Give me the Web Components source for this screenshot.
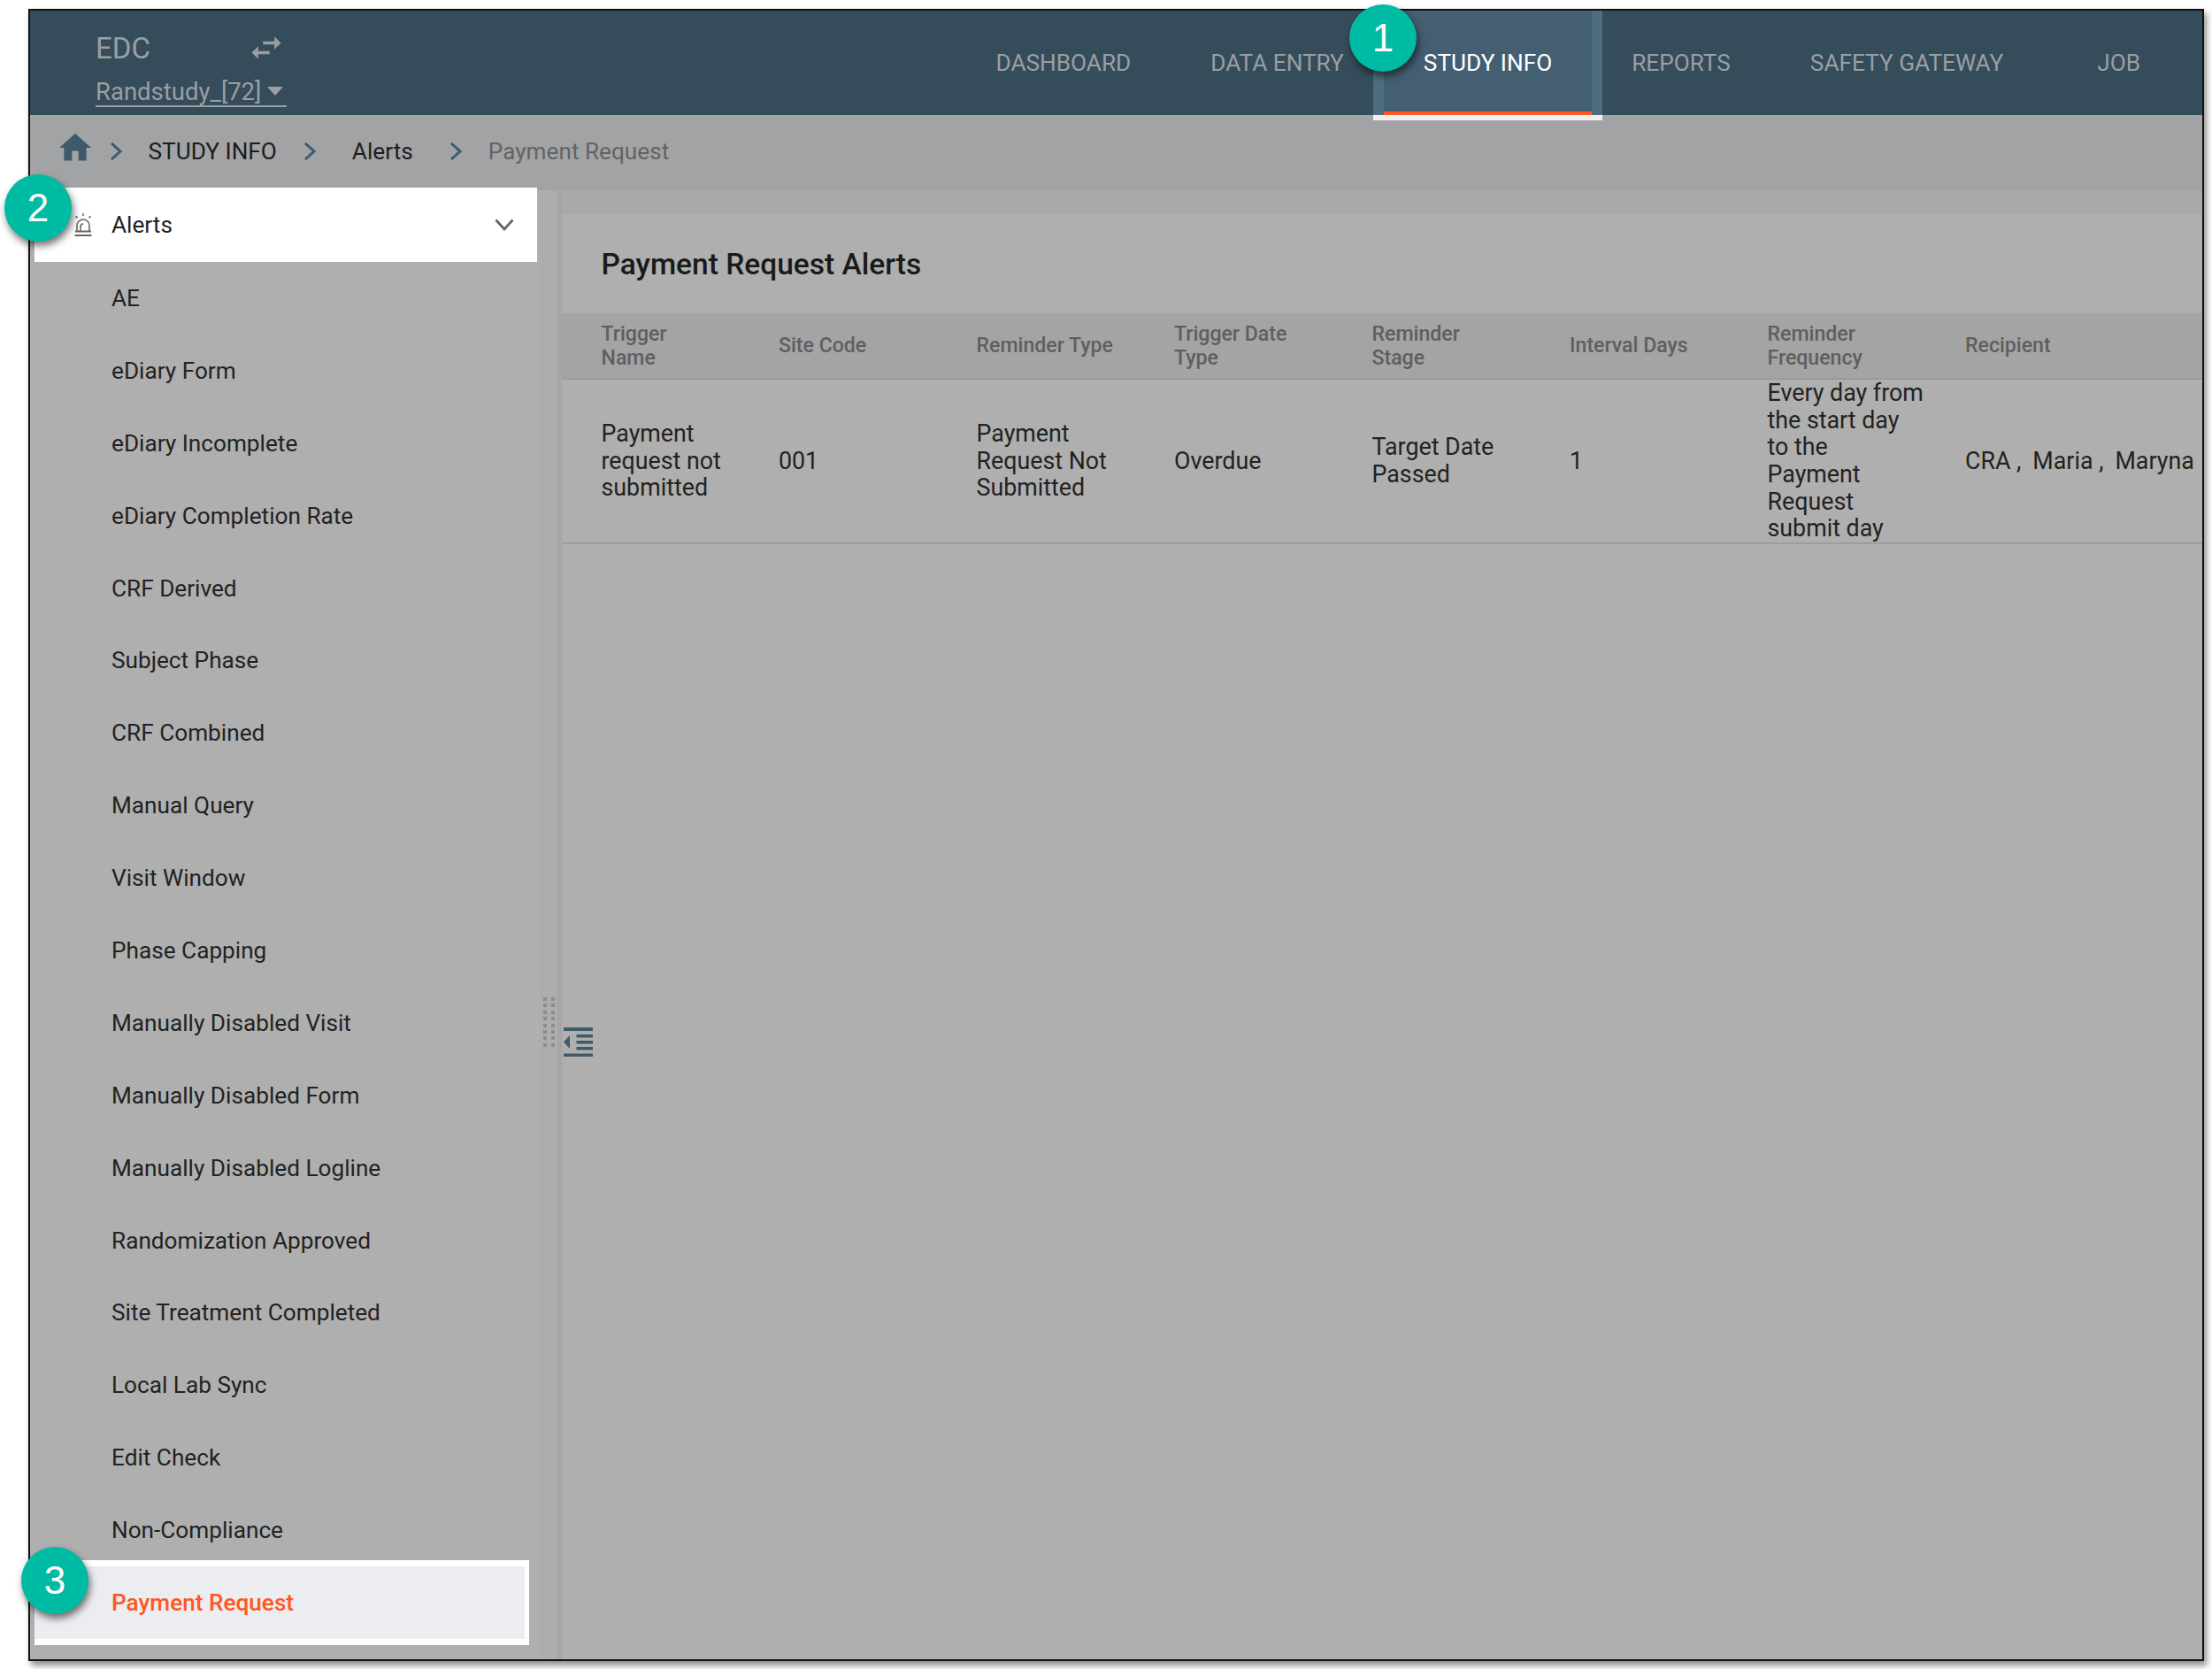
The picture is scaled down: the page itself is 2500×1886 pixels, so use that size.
<!DOCTYPE html>
<html>
<head>
<meta charset="utf-8">
<title>Payment Request Alerts</title>
<style>
  html, body { margin: 0; padding: 0; background: #fff; }
  body { width: 2500px; height: 1886px; overflow: hidden; font-family: Roboto, "Liberation Sans", sans-serif; position: relative; }
</style>
</head>
<body>

<app-frame>
  <top-bar slot="top">
    <nav-tab>DASHBOARD</nav-tab>
    <nav-tab>DATA ENTRY</nav-tab>
    <nav-tab active>STUDY INFO</nav-tab>
    <nav-tab>REPORTS</nav-tab>
    <nav-tab>SAFETY GATEWAY</nav-tab>
    <nav-tab class="last">JOB</nav-tab>
  </top-bar>
  <bread-crumbs slot="top"></bread-crumbs>
  <side-menu slot="side">
    <menu-item>AE</menu-item>
    <menu-item>eDiary Form</menu-item>
    <menu-item>eDiary Incomplete</menu-item>
    <menu-item>eDiary Completion Rate</menu-item>
    <menu-item>CRF Derived</menu-item>
    <menu-item>Subject Phase</menu-item>
    <menu-item>CRF Combined</menu-item>
    <menu-item>Manual Query</menu-item>
    <menu-item>Visit Window</menu-item>
    <menu-item>Phase Capping</menu-item>
    <menu-item>Manually Disabled Visit</menu-item>
    <menu-item>Manually Disabled Form</menu-item>
    <menu-item>Manually Disabled Logline</menu-item>
    <menu-item>Randomization Approved</menu-item>
    <menu-item>Site Treatment Completed</menu-item>
    <menu-item>Local Lab Sync</menu-item>
    <menu-item>Edit Check</menu-item>
    <menu-item>Non-Compliance</menu-item>
    <menu-item selected>Payment Request</menu-item>
  </side-menu>
  <alert-panel slot="main"></alert-panel>
</app-frame>

<step-badge style="left:1525px;top:5px">1</step-badge>
<step-badge style="left:5px;top:197px">2</step-badge>
<step-badge style="left:24px;top:1748px">3</step-badge>

<script>
class AppFrame extends HTMLElement {
  constructor() {
    super();
    this.attachShadow({mode: "open"}).innerHTML = `
    <style>
      :host {
        display: flex;
        flex-direction: column;
        box-sizing: border-box;
        width: 2459px;
        height: 1867px;
        margin: 10px 0 0 32px;
        border: 2px solid #111;
        background: #afafaf;
        box-shadow: 3px 5px 7px rgba(0,0,0,.45);
      }
      .body { flex: 1; display: flex; min-height: 0; }
      .gutter {
        position: relative;
        flex: none;
        box-sizing: border-box;
        width: 25px;
        background: #adadad;
        border-right: 5px solid #a6a6a6;
      }
      .dots {
        position: absolute;
        left: 4px;
        top: 912px;
        display: grid;
        grid-template-columns: 4px 4px;
        column-gap: 4.5px;
        row-gap: 3.4px;
      }
      .dots i { width: 4px; height: 4px; background: #8c8c8c; }
      .collapse { position: absolute; left: 27px; top: 946px; width: 33px; height: 33px; }
      .main { flex: 1; min-width: 0; }
    </style>
    <slot name="top"></slot>
    <div class="body">
      <slot name="side"></slot>
      <div class="gutter">
        <div class="dots">${"<i></i>".repeat(16)}</div>
        <svg class="collapse" viewBox="0 0 33 33" fill="#3f5a6b">
          <rect x="0" y="0" width="33" height="4"/>
          <rect x="14.5" y="8" width="18.5" height="3.5"/>
          <rect x="14.5" y="15" width="18.5" height="3.5"/>
          <rect x="14.5" y="22" width="18.5" height="3.5"/>
          <rect x="0" y="29.500" width="33" height="3.5"/>
          <path d="M7 9v15L0 16.500z"/>
        </svg>
      </div>
      <div class="main"><slot name="main"></slot></div>
    </div>`;
  }
}

class TopBar extends HTMLElement {
  constructor() {
    super();
    this.attachShadow({mode: "open"}).innerHTML = `
    <style>
      :host {
        display: flex;
        align-items: stretch;
        justify-content: space-between;
        height: 118px;
        background: #354c5a;
        position: relative;
        z-index: 2;
      }
      .study { padding: 0 0 0 74px; color: #9b9fa2; }
      .edc {
        display: flex;
        align-items: center;
        justify-content: space-between;
        width: 215px;
        height: 32px;
        margin-top: 26px;
        font-size: 33px;
      }
      .edc svg { width: 44px; height: 44px; fill: #9b9fa2; }
      .pick {
        display: flex;
        align-items: center;
        gap: 7px;
        margin-top: 17px;
        height: 32px;
        font-size: 27.5px;
        border-bottom: 2px solid #9b9fa2;
        width: 216px;
        white-space: nowrap;
      }
      .pick i {
        border-left: 9px solid transparent;
        border-right: 9px solid transparent;
        border-top: 10px solid #9b9fa2;
      }
      nav { display: flex; align-items: stretch; margin-right: 25px; }
    </style>
    <div class="study">
      <div class="edc"><span>EDC</span>
        <svg viewBox="0 0 24 24"><path d="M6.99 11L3 15l3.99 4v-3H14v-2H6.99v-3zM21 9l-3.99-4v3H10v2h7.01v3L21 9z"/></svg>
      </div>
      <div class="pick"><span>Randstudy_[72]</span><i></i></div>
    </div>
    <nav><slot></slot></nav>`;
  }
}

class NavTab extends HTMLElement {
  constructor() {
    super();
    this.attachShadow({mode: "open"}).innerHTML = `
    <style>
      :host {
        display: flex;
        align-items: center;
        position: relative;
        padding: 0 45px;
        font-size: 26.2px;
        color: #9b9fa2;
      }
      :host(.last) { margin-left: 16px; }
      :host([active]) { background: #445f72; color: #fff; }
      :host([active])::after {
        content: "";
        position: absolute;
        left: -12px;
        right: -12px;
        top: 0;
        bottom: 0;
        box-sizing: border-box;
        border-left: 12px solid #4f6c80;
        border-right: 12px solid #4f6c80;
        box-shadow: 0 6px 0 #f0f0f2;
      }
      :host([active])::before {
        content: "";
        position: absolute;
        left: 0;
        right: 0;
        bottom: 0;
        height: 4px;
        background: #ff5722;
      }
    </style>
    <slot></slot>`;
  }
}

class BreadCrumbs extends HTMLElement {
  constructor() {
    super();
    const chevron = `<svg class="chev" viewBox="0 0 14 20"><path d="M2 1l10 9-10 9" fill="none" stroke="#3f5a6b" stroke-width="3"/></svg>`;
    this.attachShadow({mode: "open"}).innerHTML = `
    <style>
      :host {
        display: flex;
        align-items: center;
        height: 85px;
        padding: 0 0 3px 36px;
        box-sizing: border-box;
        background: #a2a3a5;
        font-size: 26.2px;
        color: #1c1c1c;
      }
      .home { width: 36px; height: 36px; fill: #3f5a6b; margin: -8px 0 0 -3px; }
      .chev { width: 14px; height: 20px; flex: none; }
      .c1 { margin: 0 29.5px 0 21px; display: flex; }
      .c2 { margin: 0 41px 0 30px; display: flex; }
      .c3 { margin: 0 30px 0 41px; display: flex; }
      .last { color: #636363; }
    </style>
    <svg class="home" viewBox="2 2 20 20"><path d="M10 20v-6h4v6h5v-8h3L12 3 2 12h3v8z"/></svg>
    <span class="c1">${chevron}</span>
    <span>STUDY INFO</span>
    <span class="c2">${chevron}</span>
    <span>Alerts</span>
    <span class="c3">${chevron}</span>
    <span class="last">Payment Request</span>`;
  }
}

class SideMenu extends HTMLElement {
  constructor() {
    super();
    this.attachShadow({mode: "open"}).innerHTML = `
    <style>
      :host {
        display: block;
        flex: none;
        width: 576px;
        background: #afafaf;
        font-size: 26.2px;
        color: #222;
      }
      .head {
        display: flex;
        align-items: center;
        position: relative;
        box-sizing: border-box;
        width: 568px;
        height: 84px;
        margin: -3px 0 0 5px;
        background: #fff;
        color: #222;
        padding-left: 44px;
      }
      .siren { width: 22px; height: 28px; margin-right: 21px; }
      .arrow { width: 22px; height: 14px; margin-left: auto; margin-right: 26px; }
    </style>
    <div class="head">
      <svg class="siren" viewBox="0 0 22 28" fill="none" stroke="#666" stroke-width="1.600">
        <path d="M4 22v-7a7 7 0 0 1 14 0v7"/>
        <path d="M8 21v-5a3 3 0 0 1 3-3"/>
        <path d="M2 21.500h18M1.500 26h19" stroke-width="2"/>
        <path d="M11 1v3M2.500 4.500l2 1.500M19.500 4.500l-2 1.500"/>
      </svg>
      <span>Alerts</span>
      <svg class="arrow" viewBox="0 0 22 14"><path d="M1.500 1.500L11 12l9.500-10.500" fill="none" stroke="#666" stroke-width="2.800"/></svg>
    </div>
    <slot></slot>`;
  }
}

class MenuItem extends HTMLElement {
  constructor() {
    super();
    this.attachShadow({mode: "open"}).innerHTML = `
    <style>
      :host {
        display: flex;
        align-items: center;
        height: 81.9px;
        padding-left: 92px;
        color: #222;
      }
      :host([selected]) {
        position: relative;
        width: 467px;
        padding-left: 87px;
        margin: -7px 0 0 5px;
        border: solid #fff;
        border-width: 7px 5px 7px 0;
        background: #ecedf1;
        color: #ff5722;
        font-weight: 500;
      }
    </style>
    <slot></slot>`;
  }
}

class AlertPanel extends HTMLElement {
  constructor() {
    super();
    const heads = ["Trigger<br>Name", "Site Code", "Reminder Type", "Trigger Date<br>Type",
      "Reminder<br>Stage", "Interval Days", "Reminder<br>Frequency", "Recipient"];
    const cells = ["Payment request not submitted", "001", "Payment Request Not Submitted", "Overdue",
      "Target Date Passed", "1", "Every day from<br>the start day<br>to the<br>Payment<br>Request<br>submit day",
      `<span class="who"><span>CRA ,</span><span>Maria ,</span><span>Maryna</span></span>`];
    this.attachShadow({mode: "open"}).innerHTML = `
    <style>
      :host { display: block; height: 100%; padding-top: 27px; box-sizing: border-box; background: linear-gradient(#a9a9a9 27px, #afafaf 27px); }
      h2 {
        display: flex;
        align-items: center;
        height: 112px;
        margin: 0;
        padding-left: 44.5px;
        font-size: 33.5px;
        font-weight: 500;
        color: #1a1a1a;
      }
      .row { display: grid; grid-template-columns: 220px repeat(6, 223.5px) 1fr; }
      .row > div {
        display: flex;
        align-items: center;
        box-sizing: border-box;
        padding: 0 20px 0 25px;
      }
      .row > div:first-child { padding-left: 44.5px; }
      .head {
        height: 73px;
        background: #a4a4a4;
        border-bottom: 2px solid #9a9a9a;
        font-size: 23.1px;
        font-weight: 500;
        line-height: 27px;
        color: #5f5f5f;
      }
      .head > div { border-right: 1px solid #a2a2a2; }
      .head > div:last-child { border-right: 0; }
      .data {
        height: 184px;
        border-bottom: 2px solid #9c9c9c;
        font-size: 26.8px;
        line-height: 30.6px;
        color: #222;
      }
      .who { display: flex; white-space: nowrap; gap: 13px; }
    </style>
    <h2>Payment Request Alerts</h2>
    <div class="row head">${heads.map(h => `<div><span>${h}</span></div>`).join("")}</div>
    <div class="row data">${cells.map(c => `<div><span>${c}</span></div>`).join("")}</div>`;
  }
}

class StepBadge extends HTMLElement {
  constructor() {
    super();
    this.attachShadow({mode: "open"}).innerHTML = `
    <style>
      :host {
        display: flex;
        align-items: center;
        justify-content: center;
        position: absolute;
        z-index: 5;
        width: 76px;
        height: 76px;
        border-radius: 50%;
        background: #00bba3;
        box-shadow: 2px 5px 8px rgba(0,0,0,.55);
        font: 44px "Liberation Sans", Arial, sans-serif;
        color: #fff;
      }
    </style>
    <slot></slot>`;
  }
}

customElements.define("app-frame", AppFrame);
customElements.define("top-bar", TopBar);
customElements.define("nav-tab", NavTab);
customElements.define("bread-crumbs", BreadCrumbs);
customElements.define("side-menu", SideMenu);
customElements.define("menu-item", MenuItem);
customElements.define("alert-panel", AlertPanel);
customElements.define("step-badge", StepBadge);
</script>
</body>
</html>
